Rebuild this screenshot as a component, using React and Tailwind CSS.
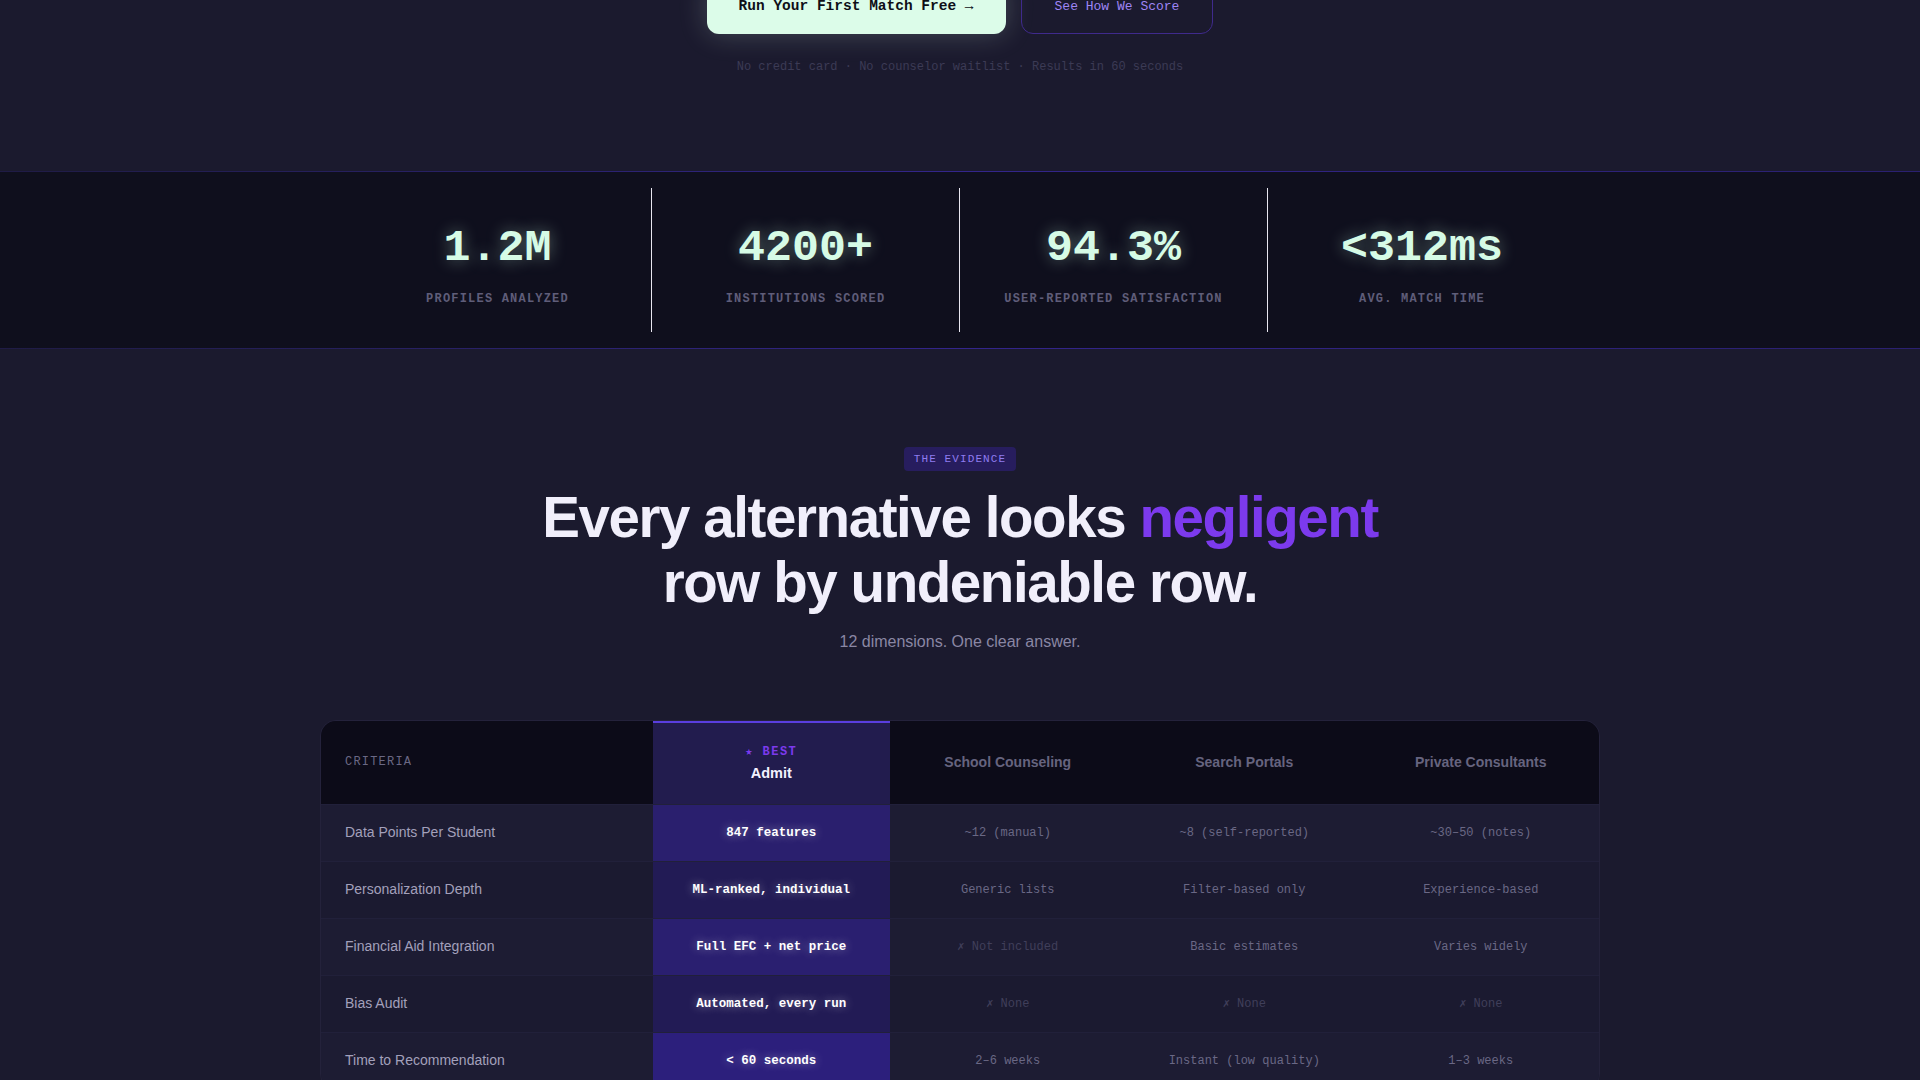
import React from 'react';

const mono = "font-['Liberation_Mono','DejaVu_Sans_Mono',monospace]";
const sans = "font-['Liberation_Sans','Arial',sans-serif]";

const stats = [
  { value: '1.2M', label: 'Profiles Analyzed' },
  { value: '4200+', label: 'Institutions Scored' },
  { value: '94.3%', label: 'User-Reported Satisfaction' },
  { value: '<312ms', label: 'Avg. Match Time' },
];

// dim: true -> the faded "✗" cells
const rows = [
  { name: 'Data Points Per Student', admit: '847 features', cells: [['~12 (manual)'], ['~8 (self-reported)'], ['~30–50 (notes)']] },
  { name: 'Personalization Depth', admit: 'ML-ranked, individual', cells: [['Generic lists'], ['Filter-based only'], ['Experience-based']] },
  { name: 'Financial Aid Integration', admit: 'Full EFC + net price', cells: [['✗ Not included', true], ['Basic estimates'], ['Varies widely']] },
  { name: 'Bias Audit', admit: 'Automated, every run', cells: [['✗ None', true], ['✗ None', true], ['✗ None', true]] },
  { name: 'Time to Recommendation', admit: '< 60 seconds', cells: [['2–6 weeks'], ['Instant (low quality)'], ['1–3 weeks']] },
];

const admitBg = ['bg-[#2a1f6e]', 'bg-[#221b55]', 'bg-[#2a1f70]', 'bg-[#221b55]', 'bg-[#2c1f7c]'];
const rowBg = ['bg-[#1d1c33]', 'bg-[#1b1a30]'];

function App() {
  return (
    <div className={`min-h-screen bg-[#1b1a2e] ${sans} overflow-hidden`}>
      {/* Hero tail (page is scrolled) */}
      <section className="-mt-[20px] pb-[95px] flex flex-col items-center">
        <div className="flex items-center gap-[15px]">
          <button className={`${mono} h-[54px] px-8 rounded-xl bg-[#dcfce9] text-[#0e0f17] font-bold text-[14.5px] shadow-[0_0_28px_rgba(220,252,233,0.22)]`}>
            Run Your First Match Free →
          </button>
          <button className={`${mono} h-[54px] px-[33px] rounded-xl border border-[#3f2a8c] text-[#9f85f5] text-[13px]`}>
            See How We Score
          </button>
        </div>
        <p className={`${mono} mt-[24px] text-[12px] text-[#3c3b55]`}>
          No credit card · No counselor waitlist · Results in 60 seconds
        </p>
      </section>

      {/* Stats band */}
      <section className="bg-[#0f0f1d]">
        <div className="h-px bg-linear-to-r from-[#1f1b45] via-[#33258c] to-[#2a2070]" />
        <div className="max-w-7xl mx-auto px-6 py-4 grid grid-cols-4">
          {stats.map((s, i) => (
            <div
              key={s.label}
              className={`h-[144px] flex flex-col items-center pt-[38px] ${i < 3 ? 'border-r border-[#e8e6f0]' : ''}`}
            >
              <div className={`${mono} text-[45px] leading-[46px] font-bold text-[#d6fbe6] [text-shadow:0_0_16px_rgba(200,250,225,0.4)]`}>
                {s.value}
              </div>
              <div className={`${mono} mt-[19px] text-[12px] leading-4 uppercase tracking-[0.1em] font-bold text-[#5f5d79]`}>
                {s.label}
              </div>
            </div>
          ))}
        </div>
        <div className="h-px bg-linear-to-r from-[#1f1b45] via-[#33258c] to-[#2a2070]" />
      </section>

      {/* Evidence */}
      <section className="pt-[98px] pb-24 flex flex-col items-center">
        <span className={`${mono} h-6 px-[10px] flex items-center rounded bg-[#271d5e] text-[#8f7cf0] text-[11px] tracking-[0.1em]`}>
          THE EVIDENCE
        </span>
        <h1 className="mt-[15px] text-center text-[56.5px] leading-[1.15] font-bold tracking-[-0.025em] text-[#f1effb]">
          Every alternative looks <span className="text-[#7c3aed]">negligent</span>
          <br />
          row by undeniable row.
        </h1>
        <p className="mt-[14px] text-[16px] leading-6 text-[#8a87a4]">12 dimensions. One clear answer.</p>

        <div className="mt-[66px] w-full max-w-7xl rounded-2xl overflow-hidden border border-[#24223b]">
          {/* Header */}
          <div className="grid grid-cols-[332px_1fr_1fr_1fr_1fr] bg-[#0c0b18] h-[83px]">
            <div className={`${mono} flex items-center pl-6 text-[12px] tracking-[0.1em] text-[#6a6884]`}>CRITERIA</div>
            <div className="bg-[#221c4e] border-t-2 border-[#5a3ee0] flex flex-col items-center justify-center gap-[3px]">
              <span className={`${mono} text-[12px] leading-4 font-bold tracking-[0.12em] text-[#7c3aed]`}>★ BEST</span>
              <span className="text-[14.5px] leading-5 font-semibold text-[#f3f1ff]">Admit</span>
            </div>
            {['School Counseling', 'Search Portals', 'Private Consultants'].map((h) => (
              <div key={h} className="flex items-center justify-center text-[14px] font-bold text-[#66647f]">
                {h}
              </div>
            ))}
          </div>

          {/* Rows */}
          {rows.map((r, i) => (
            <div key={r.name} className={`grid grid-cols-[332px_1fr_1fr_1fr_1fr] h-[57px] border-t border-[#21203a] ${rowBg[i % 2]}`}>
              <div className="flex items-center pl-6 text-[14px] text-[#a3a0bb]">{r.name}</div>
              <div className={`${admitBg[i]} flex items-center justify-center ${mono} text-[12.5px] font-bold text-white [text-shadow:0_0_10px_rgba(255,255,255,0.45)]`}>
                {r.admit}
              </div>
              {r.cells.map(([t, dim], j) => (
                <div
                  key={j}
                  className={`flex items-center justify-center ${mono} text-[12px] ${dim ? 'text-[#403f5a]' : 'text-[#6a6885]'}`}
                >
                  {t}
                </div>
              ))}
            </div>
          ))}
        </div>
      </section>
    </div>
  );
}

export default App;
